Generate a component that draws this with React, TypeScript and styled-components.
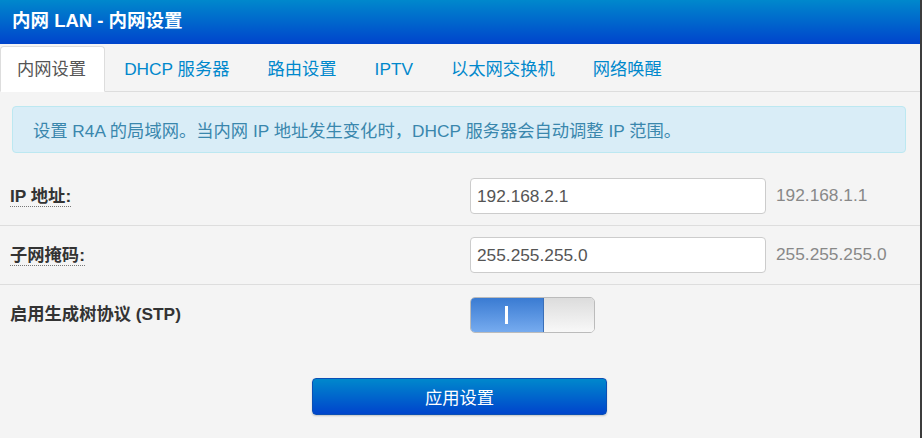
import React from "react";
import styled, { createGlobalStyle } from "styled-components";

const Global = createGlobalStyle`
  html, body {
    margin: 0;
    padding: 0;
    background: #f4f4f4;
    height: 100%;
  }
  body {
    font-family: "Liberation Sans", "Noto Sans CJK SC", sans-serif;
    font-size: 17.3px;
    color: #333;
  }
  #root { height: 100%; }
`;

const Page = styled.div`
  width: 920px;
  height: 438px;
  border-right: 2px solid #3c3c3c;
  background: #f4f4f4;
  display: flex;
  flex-direction: column;
`;

const Header = styled.div`
  height: 44px;
  background: linear-gradient(to bottom, #0088cc, #0044cc);
  display: flex;
  align-items: center;
  padding-left: 12px;
`;

const Title = styled.h1`
  margin: 0;
  font-size: 18.5px;
  font-weight: bold;
  color: #fff;
  line-height: 22px;
  margin-top: -2px;
`;

const TabBar = styled.ul`
  list-style: none;
  margin: 0;
  padding: 2px 0 0 0;
  height: 45px;
  display: flex;
  align-items: flex-end;
  border-bottom: 1px solid #dddddd;
`;

const Tab = styled.li<{ $active?: boolean }>`
  height: 44px;
  line-height: 44px;
  padding: 0 17.5px 0 16px;
  margin-right: 2.5px;
  margin-bottom: -1px;
  border: 1px solid ${(p) => (p.$active ? "#dddddd" : "transparent")};
  border-bottom-color: transparent;
  border-radius: 4px 4px 0 0;
  background: ${(p) => (p.$active ? "#ffffff" : "transparent")};
  color: ${(p) => (p.$active ? "#555555" : "#0088cc")};
  white-space: nowrap;
`;

const Content = styled.div`
  display: flex;
  flex-direction: column;
`;

const Alert = styled.div`
  margin: 14px 14px 14px 12px;
  height: 45px;
  border: 1px solid #bce8f1;
  border-radius: 4px;
  background: #d9edf7;
  color: #3a87ad;
  display: flex;
  align-items: center;
  padding-left: 20px;
  white-space: nowrap;
`;

const Row = styled.div<{ $last?: boolean }>`
  height: ${(p) => (p.$last ? "59px" : "58px")};
  display: grid;
  grid-template-columns: 470px 296px auto;
  align-items: center;
  border-bottom: ${(p) => (p.$last ? "none" : "1px solid #dddddd")};
`;

const Label = styled.span<{ $dotted?: boolean }>`
  justify-self: start;
  margin-left: 10px;
  font-weight: bold;
  color: #333;
  line-height: 19px;
  border-bottom: ${(p) => (p.$dotted ? "1px dotted #777" : "none")};
  margin-top: ${(p) => (p.$dotted ? "2px" : "0")};
`;

const Input = styled.input`
  box-sizing: border-box;
  width: 296px;
  height: 36px;
  border: 1px solid #cccccc;
  border-radius: 4px;
  background: #fff;
  padding: 0 6px;
  font: inherit;
  color: #555;
  outline: none;
`;

const DefaultValue = styled.span`
  margin-left: 10px;
  color: #888;
  margin-top: -2px;
`;

const Toggle = styled.div`
  box-sizing: border-box;
  width: 125px;
  height: 36px;
  border: 1px solid #bbbbbb;
  border-radius: 5px;
  overflow: hidden;
  display: flex;
`;

const ToggleOn = styled.div`
  width: 72px;
  background: linear-gradient(to bottom, #3a7bd2, #76abef);
  border-right: 1px solid #3a6fb8;
  display: flex;
  align-items: center;
  justify-content: center;
`;

const Bar = styled.span`
  width: 3px;
  height: 18px;
  background: #fff;
  margin-left: -2px;
`;

const ToggleOff = styled.div`
  flex: 1;
  background: linear-gradient(to bottom, #dcdcdc, #f8f8f8);
`;

const ButtonRow = styled.div`
  display: flex;
  justify-content: center;
  padding-top: 34px;
  padding-right: 1px;
`;

const Button = styled.button`
  width: 295px;
  height: 37px;
  border: 1px solid #0a4fb5;
  border-radius: 4px;
  background: linear-gradient(to bottom, #0088cc, #0044cc);
  color: #fff;
  font: inherit;
  box-shadow: 0 1px 2px rgba(0, 0, 0, 0.2);
  cursor: pointer;
`;

const tabs = ["内网设置", "DHCP 服务器", "路由设置", "IPTV", "以太网交换机", "网络唤醒"];

export default function App() {
  return (
    <>
      <Global />
      <Page>
        <Header>
          <Title>内网 LAN - 内网设置</Title>
        </Header>
        <TabBar>
          {tabs.map((t, i) => (
            <Tab key={t} $active={i === 0}>
              {t}
            </Tab>
          ))}
        </TabBar>
        <Content>
          <Alert>设置 R4A 的局域网。当内网 IP 地址发生变化时，DHCP 服务器会自动调整 IP 范围。</Alert>
          <Row>
            <Label $dotted>IP 地址:</Label>
            <Input defaultValue="192.168.2.1" />
            <DefaultValue>192.168.1.1</DefaultValue>
          </Row>
          <Row>
            <Label $dotted>子网掩码:</Label>
            <Input defaultValue="255.255.255.0" />
            <DefaultValue>255.255.255.0</DefaultValue>
          </Row>
          <Row $last>
            <Label>启用生成树协议 (STP)</Label>
            <Toggle>
              <ToggleOn>
                <Bar />
              </ToggleOn>
              <ToggleOff />
            </Toggle>
          </Row>
          <ButtonRow>
            <Button>应用设置</Button>
          </ButtonRow>
        </Content>
      </Page>
    </>
  );
}
